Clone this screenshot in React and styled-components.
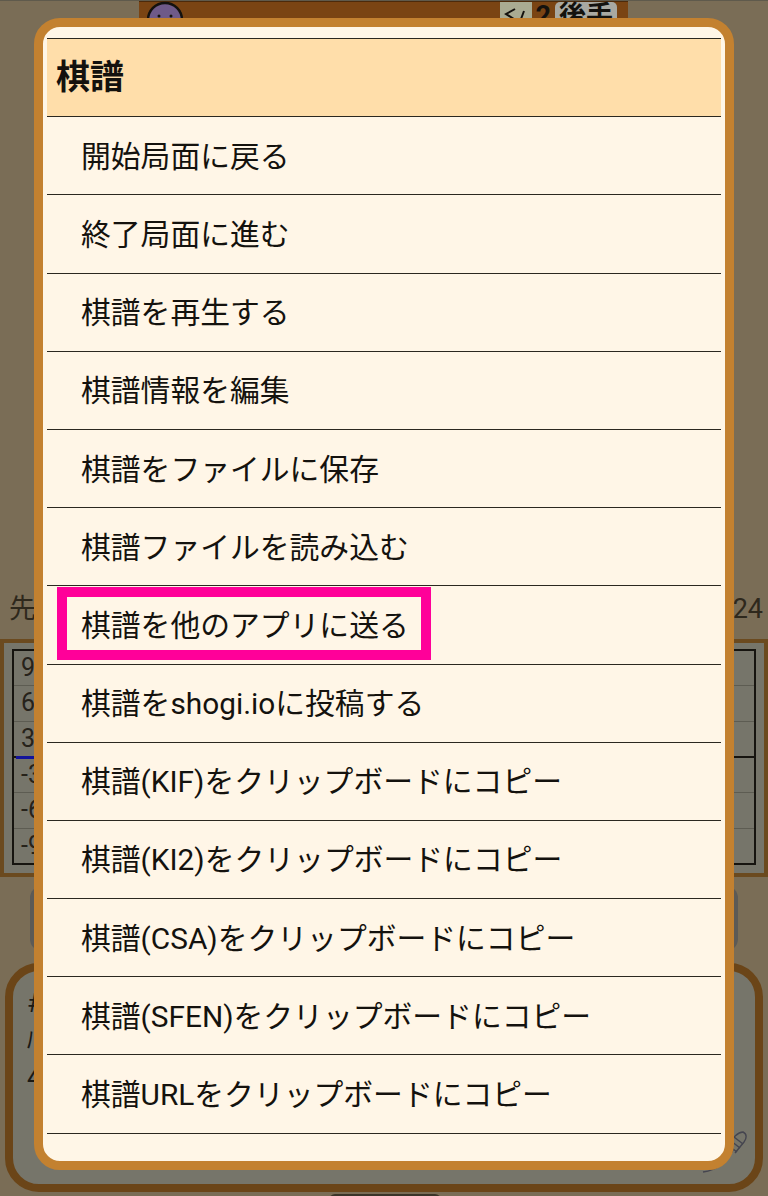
import React from 'react';
import styled, { createGlobalStyle } from 'styled-components';

const GlobalStyle = createGlobalStyle`
  html, body {
    margin: 0;
    padding: 0;
    background: #7a6d56;
  }
  body {
    font-family: "Roboto", "Noto Sans CJK JP", sans-serif;
  }
`;

const Page = styled.div`
  position: relative;
  width: 768px;
  height: 1196px;
  overflow: hidden;
  background: #7a6d56;
  color: #2a241a;
`;

const TopEdge = styled.div`
  height: 1px;
  background: #5f5a4c;
`;

const BoardHead = styled.div`
  display: flex;
  justify-content: space-between;
  height: 29px;
  margin: 0 140px 0 139px;
  padding: 0 11px 0 7px;
  background: #7a4413;
  border-top: 1px solid #4d2a0a;
`;

const Face = styled.svg`
  margin-top: -1px;
`;

const SideTag = styled.div`
  display: flex;
  align-items: flex-start;
  height: 18px;
  font-size: 27px;
  line-height: 29px;
  font-weight: 700;
  color: #14120e;
  white-space: nowrap;
`;

const TagMark = styled.svg`
  margin-right: 4px;
  background: #a9ab92;
`;

const TagName = styled.span`
  margin-left: 4px;
  padding: 0 4px;
  border-radius: 5px 5px 0 0;
  background: #a9a9a2;
`;

const ScoreRow = styled.div`
  display: flex;
  justify-content: space-between;
  margin: 560px 0 12px;
  padding: 0 5px 0 9px;
  font-size: 27px;
  line-height: 36px;
  color: #2e281c;
`;

const GraphPanel = styled.div`
  height: 238px;
  box-sizing: border-box;
  padding: 6px 8px 8px;
  background: #76756a;
  border: 4px solid #6b4a1f;
`;

const GraphFrame = styled.div`
  position: relative;
  display: flex;
  flex-direction: column;
  height: 100%;
  box-sizing: border-box;
  border: 2px solid #16140f;
`;

const GraphRow = styled.div`
  flex: 1;
  padding-left: 7px;
  font-size: 25px;
  line-height: 33px;
  color: #26221a;
  border-top: ${({ $line }) => ($line === 'axis' ? '2px solid #16140f' : $line ? '1px solid #5d5c52' : 'none')};
`;

const ScoreLine = styled.div`
  position: absolute;
  left: 2px;
  top: 105px;
  width: 30px;
  height: 3px;
  background: #13139a;
`;

const ButtonRow = styled.div`
  height: 65px;
  margin: 9px 30px 0;
  border-radius: 12px;
  background: #5c5a56;
`;

const CommentPanel = styled.div`
  height: 229px;
  box-sizing: border-box;
  margin: 12px 5px 0;
  padding: 14px 14px;
  border: 8px solid #6b4518;
  border-radius: 34px;
  background: #76756a;
  font-size: 26px;
  line-height: 37px;
  color: #1b1914;
`;

const Modal = styled.div`
  position: absolute;
  left: 34px;
  top: 18px;
  width: 700px;
  height: 1152px;
  box-sizing: border-box;
  padding: 8px 4px 0;
  background: #fff6e7;
  border: 9px solid #c38130;
  border-radius: 26px;
`;

const Menu = styled.ul`
  list-style: none;
  margin: 3px 0 0;
  padding: 0;
  border-top: 1px solid #2b2820;
`;

const MenuRow = styled.li`
  position: relative;
  display: flex;
  align-items: center;
  box-sizing: border-box;
  height: 78.2px;
  padding-left: ${({ $head }) => ($head ? '9px' : '34px')};
  padding-bottom: ${({ $head }) => ($head ? '6px' : '4px')};
  background: ${({ $head }) => ($head ? '#ffdeaa' : 'transparent')};
  border-bottom: 1px solid #2b2820;
  font-size: ${({ $head }) => ($head ? '34px' : '29.8px')};
  font-weight: ${({ $head }) => ($head ? 700 : 400)};
  color: #14120e;
  white-space: nowrap;
`;

const Highlight = styled.div`
  position: absolute;
  left: 10px;
  top: 1px;
  width: 374px;
  height: 73px;
  box-sizing: border-box;
  border: 10px solid #ff0099;
`;

const Quill = styled.svg`
  position: absolute;
  right: 20px;
  bottom: 22px;
`;

const Pill = styled.div`
  position: absolute;
  left: 329px;
  bottom: -4px;
  width: 112px;
  height: 6px;
  border-radius: 6px 6px 0 0;
  background: #3a3428;
`;

const items = [
  '開始局面に戻る',
  '終了局面に進む',
  '棋譜を再生する',
  '棋譜情報を編集',
  '棋譜をファイルに保存',
  '棋譜ファイルを読み込む',
  '棋譜を他のアプリに送る',
  '棋譜をshogi.ioに投稿する',
  '棋譜(KIF)をクリップボードにコピー',
  '棋譜(KI2)をクリップボードにコピー',
  '棋譜(CSA)をクリップボードにコピー',
  '棋譜(SFEN)をクリップボードにコピー',
  '棋譜URLをクリップボードにコピー',
];

const graphLabels = ['9', '6', '3', '-3', '-6', '-9'];

export default function App() {
  return (
    <Page>
      <GlobalStyle />
      <TopEdge />
      <BoardHead>
        <Face width="38" height="38" viewBox="0 0 38 38">
          <circle cx="19" cy="19" r="17" fill="#6f5a88" stroke="#14120e" strokeWidth="2.5" />
          <circle cx="13" cy="15" r="1.5" fill="#14120e" />
          <circle cx="25" cy="15" r="1.5" fill="#14120e" />
        </Face>
        <SideTag>
          <TagMark width="32" height="18" viewBox="0 0 32 18" fill="none" stroke="#14120e" strokeWidth="2">
            <path d="M15 7l-9 5 8 5M24 9l-3 8" />
          </TagMark>
          <span>2</span>
          <TagName>後手</TagName>
        </SideTag>
      </BoardHead>
      <ScoreRow>
        <span>先</span>
        <span>24</span>
      </ScoreRow>
      <GraphPanel>
        <GraphFrame>
          {graphLabels.map((label, i) => (
            <GraphRow key={label} $line={i === 3 ? 'axis' : i > 0}>
              {label}
            </GraphRow>
          ))}
          <ScoreLine />
        </GraphFrame>
      </GraphPanel>
      <ButtonRow />
      <CommentPanel>
        <div>#</div>
        <div>ﾊ</div>
        <div>4</div>
      </CommentPanel>
      <Quill width="46" height="46" viewBox="0 0 46 46" fill="none" stroke="#45454f" strokeWidth="1.4">
        <path d="M1 44c14-2 24-10 30-22M28 16c2-6 8-12 13-12 4 2 4 6 1 10l-9 11" />
        <path d="M29 13l9 7M32 9l9 7M27 18l8 6" />
      </Quill>
      <Pill />
      <Modal>
        <Menu>
          <MenuRow $head>棋譜</MenuRow>
          {items.map((item) => (
            <MenuRow key={item}>
              {item === '棋譜を他のアプリに送る' && <Highlight />}
              {item}
            </MenuRow>
          ))}
        </Menu>
      </Modal>
    </Page>
  );
}
